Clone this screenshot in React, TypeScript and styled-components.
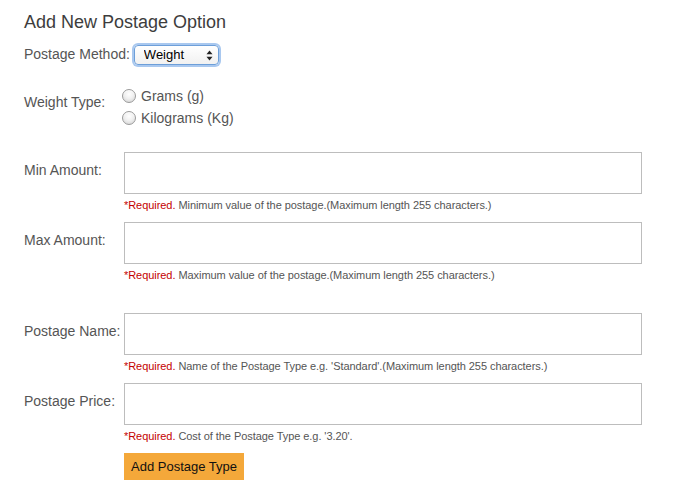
import React from "react";
import styled, { createGlobalStyle } from "styled-components";

const Global = createGlobalStyle`
  html, body { margin: 0; padding: 0; background: #fff; }
  body { font-family: "Liberation Sans", Arial, Helvetica, sans-serif; }
  * { box-sizing: border-box; }
`;

const Page = styled.div`
  padding: 11px 24px 0 24px;
  width: 685px;
`;

const Heading = styled.h2`
  margin: 0;
  font-size: 18px;
  line-height: 22px;
  font-weight: normal;
  color: #3d3d3d;
`;

const MethodRow = styled.div`
  display: flex;
  align-items: center;
  margin-top: 11px;
  height: 20px;
`;

const Label = styled.label<{ $top?: number }>`
  display: block;
  width: 100px;
  flex: none;
  font-size: 14px;
  line-height: 16px;
  color: #555;
  padding-top: ${(p) => p.$top ?? 10}px;
  white-space: nowrap;
`;

const InlineLabel = styled.label`
  font-size: 14px;
  line-height: 16px;
  color: #555;
  margin-right: 4px;
`;

const SelectWrap = styled.div`
  position: relative;
  width: 85px;
  height: 20px;
  margin-top: 1px;
`;

const Select = styled.select`
  appearance: none;
  -webkit-appearance: none;
  width: 100%;
  height: 100%;
  margin: 0;
  padding: 0 18px 0 9px;
  font-family: "Liberation Sans", Arial, sans-serif;
  font-size: 13px;
  color: #000;
  border: 1px solid #6d9fd9;
  border-radius: 4px;
  background: linear-gradient(#ffffff, #f1f1f1);
  box-shadow: 0 0 0 2px #a9c8ef;
  outline: none;
`;

const Arrows = styled.svg`
  position: absolute;
  right: 6px;
  top: 5px;
  pointer-events: none;
`;

const Row = styled.div<{ $mt?: number }>`
  display: flex;
  align-items: flex-start;
  margin-top: ${(p) => p.$mt ?? 0}px;
`;

const RadioGroup = styled.div`
  display: flex;
  flex-direction: column;
  margin-left: -2px;
  margin-top: -1px;
`;

const RadioLine = styled.label`
  display: flex;
  align-items: center;
  height: 22px;
  font-size: 14px;
  color: #555;
`;

const Radio = styled.input`
  appearance: none;
  -webkit-appearance: none;
  width: 14px;
  height: 14px;
  margin: 0 5px 1px 0;
  border-radius: 50%;
  border: 1px solid #9a9a9a;
  background: radial-gradient(circle at 50% 35%, #ffffff 0%, #f0f0f0 45%, #cfcfcf 100%);
  box-shadow: inset 0 1px 1px rgba(255,255,255,0.8);
`;

const Field = styled.div`
  display: flex;
  flex-direction: column;
`;

const TextInput = styled.input`
  width: 518px;
  height: 42px;
  margin: 0;
  border: 1px solid #bdbdbd;
  background: #fff;
  font-size: 14px;
  padding: 0 6px;
  outline: none;
`;

const Help = styled.div`
  margin-top: 4px;
  font-size: 11px;
  line-height: 14px;
  letter-spacing: -0.06px;
  color: #555;
  white-space: nowrap;
`;

const Req = styled.span`
  color: #c40000;
`;

const FormRow = styled.div<{ $mb?: number }>`
  display: flex;
  align-items: flex-start;
  margin-bottom: ${(p) => p.$mb ?? 10}px;
`;

const Button = styled.button`
  margin-left: 100px;
  width: 120px;
  height: 27px;
  border: none;
  background: #f4a83a;
  color: #111;
  font-family: "Liberation Sans", Arial, sans-serif;
  font-size: 13px;
  padding: 0;
  cursor: pointer;
`;

const fields = [
  { label: "Min Amount:", help: "Minimum value of the postage.(Maximum length 255 characters.)", mb: 10 },
  { label: "Max Amount:", help: "Maximum value of the postage.(Maximum length 255 characters.)", mb: 31 },
  { label: "Postage Name:", help: "Name of the Postage Type e.g. 'Standard'.(Maximum length 255 characters.)", mb: 10 },
  { label: "Postage Price:", help: "Cost of the Postage Type e.g. '3.20'.", mb: 10 },
];

export default function App() {
  return (
    <>
      <Global />
      <Page>
        <Heading>Add New Postage Option</Heading>
        <MethodRow>
          <InlineLabel>Postage Method:</InlineLabel>
          <SelectWrap>
            <Select defaultValue="weight">
              <option value="weight">Weight</option>
              <option value="price">Price</option>
            </Select>
            <Arrows width="7" height="11" viewBox="0 0 7 11">
              <path d="M3.5 0.5 L6.5 4.2 L0.5 4.2 Z" fill="#222" />
              <path d="M3.5 10.5 L6.5 6.8 L0.5 6.8 Z" fill="#222" />
            </Arrows>
          </SelectWrap>
        </MethodRow>
        <Row $mt={22}>
          <Label $top={8}>Weight Type:</Label>
          <RadioGroup>
            <RadioLine>
              <Radio type="radio" name="wt" />
              Grams (g)
            </RadioLine>
            <RadioLine>
              <Radio type="radio" name="wt" />
              Kilograms (Kg)
            </RadioLine>
          </RadioGroup>
        </Row>
        <div style={{ height: 23 }} />
        {fields.map((f) => (
          <FormRow key={f.label} $mb={f.mb}>
            <Label>{f.label}</Label>
            <Field>
              <TextInput type="text" />
              <Help>
                <Req>*Required.</Req> {f.help}
              </Help>
            </Field>
          </FormRow>
        ))}
        <Button type="button">Add Postage Type</Button>
      </Page>
    </>
  );
}
